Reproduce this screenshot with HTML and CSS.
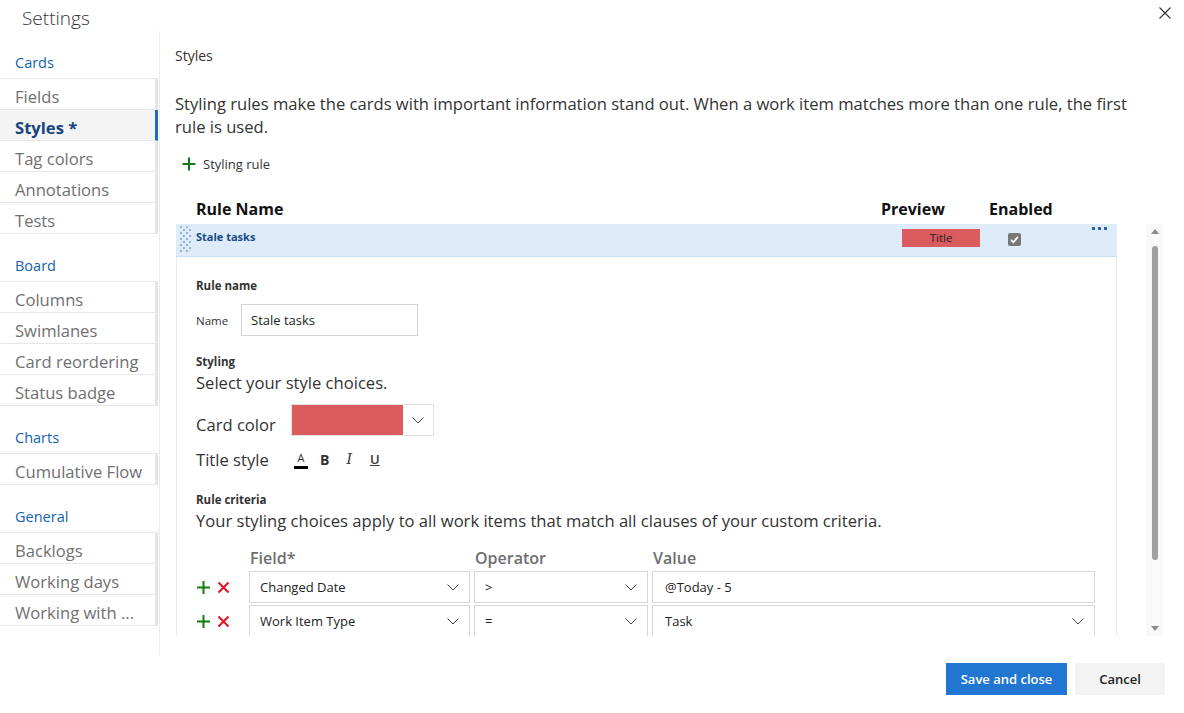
FILE: index.html
```html
<!DOCTYPE html>
<html lang="en">
<head>
<meta charset="utf-8">
<title>Settings</title>
<link rel="stylesheet" href="styles.css">
</head>
<body>
<div class="dialog">
  <header class="dlg-header">
    <h1 class="dlg-title">Settings</h1>
    <button class="close-btn" aria-label="Close">
      <svg width="12" height="12" viewBox="0 0 12 12"><path d="M0.5 0.5 L11.5 11.5 M11.5 0.5 L0.5 11.5" stroke="#333" stroke-width="1.1" fill="none"/></svg>
    </button>
  </header>

  <div class="dlg-body">
    <nav class="nav">
      <div class="nav-section">Cards</div>
      <div class="nav-item">Fields</div>
      <div class="nav-item selected">Styles *</div>
      <div class="nav-item">Tag colors</div>
      <div class="nav-item">Annotations</div>
      <div class="nav-item">Tests</div>
      <div class="nav-section">Board</div>
      <div class="nav-item">Columns</div>
      <div class="nav-item">Swimlanes</div>
      <div class="nav-item">Card reordering</div>
      <div class="nav-item">Status badge</div>
      <div class="nav-section">Charts</div>
      <div class="nav-item">Cumulative Flow</div>
      <div class="nav-section">General</div>
      <div class="nav-item">Backlogs</div>
      <div class="nav-item">Working days</div>
      <div class="nav-item">Working with ...</div>
    </nav>

    <main class="content">
      <div class="page-title">Styles</div>
      <p class="desc">Styling rules make the cards with important information stand out. When a work item matches more than one rule, the first rule is used.</p>
      <button class="add-rule">
        <svg width="14" height="14" viewBox="0 0 14 14"><path d="M7 0.5 V13.5 M0.5 7 H13.5" stroke="#107c10" stroke-width="2" fill="none"/></svg>
        <span>Styling rule</span>
      </button>

      <div class="rules-head">
        <div></div>
        <div class="col-name">Rule Name</div>
        <div class="col-preview">Preview</div>
        <div class="col-enabled">Enabled</div>
        <div></div>
      </div>

      <div class="rules-scroll">
        <div class="rules-list">
          <div class="rule-row">
            <div class="handle">
              <svg width="12" height="30" viewBox="0 0 12 30">
                <g fill="#8fb3da">
                  <rect x="0" y="1" width="2" height="2"/><rect x="6" y="1" width="2" height="2"/>
                  <rect x="3" y="4" width="2" height="2"/><rect x="9" y="4" width="2" height="2"/>
                  <rect x="0" y="7" width="2" height="2"/><rect x="6" y="7" width="2" height="2"/>
                  <rect x="3" y="10" width="2" height="2"/><rect x="9" y="10" width="2" height="2"/>
                  <rect x="0" y="13" width="2" height="2"/><rect x="6" y="13" width="2" height="2"/>
                  <rect x="3" y="16" width="2" height="2"/><rect x="9" y="16" width="2" height="2"/>
                  <rect x="0" y="19" width="2" height="2"/><rect x="6" y="19" width="2" height="2"/>
                  <rect x="3" y="22" width="2" height="2"/><rect x="9" y="22" width="2" height="2"/>
                  <rect x="0" y="25" width="2" height="2"/><rect x="6" y="25" width="2" height="2"/>
                </g>
              </svg>
            </div>
            <div class="rule-name">Stale tasks</div>
            <div class="preview-cell"><span class="preview-box">Title</span></div>
            <div class="enabled-cell">
              <svg width="13" height="13" viewBox="0 0 13 13"><rect x="0" y="0" width="13" height="13" rx="2" fill="#787878"/><path d="M3 6.8 L5.4 9.2 L10 3.8" stroke="#fff" stroke-width="1.8" fill="none"/></svg>
            </div>
            <div class="more-cell">
              <svg width="15" height="4" viewBox="0 0 15 4"><g fill="#2b63a8"><rect x="0" y="0" width="3" height="3"/><rect x="6" y="0" width="3" height="3"/><rect x="12" y="0" width="3" height="3"/></g></svg>
            </div>
          </div>

          <div class="rule-panel">
            <div class="label-bold">Rule name</div>
            <div class="name-row">
              <span class="small-label">Name</span>
              <div class="text-input">Stale tasks</div>
            </div>

            <div class="label-bold mt-styling">Styling</div>
            <div class="help-text">Select your style choices.</div>

            <div class="color-row">
              <span class="big-label">Card color</span>
              <div class="color-picker">
                <span class="swatch"></span>
                <span class="picker-chev">
                  <svg width="12" height="7" viewBox="0 0 12 7"><path d="M0.5 0.5 L6 6 L11.5 0.5" stroke="#444" stroke-width="1" fill="none"/></svg>
                </span>
              </div>
            </div>

            <div class="title-row">
              <span class="big-label">Title style</span>
              <div class="fmt-tools">
                <span class="fmt fmt-a">A</span>
                <span class="fmt fmt-b">B</span>
                <span class="fmt fmt-i">I</span>
                <span class="fmt fmt-u">U</span>
              </div>
            </div>

            <div class="label-bold mt-criteria">Rule criteria</div>
            <div class="help-text">Your styling choices apply to all work items that match all clauses of your custom criteria.</div>

            <div class="criteria">
              <div></div>
              <div class="crit-head">Field*</div>
              <div class="crit-head">Operator</div>
              <div class="crit-head">Value</div>

              <div class="crit-actions">
                <svg width="13" height="13" viewBox="0 0 13 13"><path d="M6.5 0 V13 M0 6.5 H13" stroke="#107c10" stroke-width="2" fill="none"/></svg>
                <svg width="13" height="13" viewBox="0 0 13 13"><path d="M1.5 1.5 L11.5 11.5 M11.5 1.5 L1.5 11.5" stroke="#e81123" stroke-width="2" fill="none"/></svg>
              </div>
              <div class="select"><span>Changed Date</span><svg width="12" height="7" viewBox="0 0 12 7"><path d="M0.5 0.5 L6 6 L11.5 0.5" stroke="#444" stroke-width="1" fill="none"/></svg></div>
              <div class="select"><span>&gt;</span><svg width="12" height="7" viewBox="0 0 12 7"><path d="M0.5 0.5 L6 6 L11.5 0.5" stroke="#444" stroke-width="1" fill="none"/></svg></div>
              <div class="select value"><span>@Today - 5</span></div>

              <div class="crit-actions">
                <svg width="13" height="13" viewBox="0 0 13 13"><path d="M6.5 0 V13 M0 6.5 H13" stroke="#107c10" stroke-width="2" fill="none"/></svg>
                <svg width="13" height="13" viewBox="0 0 13 13"><path d="M1.5 1.5 L11.5 11.5 M11.5 1.5 L1.5 11.5" stroke="#e81123" stroke-width="2" fill="none"/></svg>
              </div>
              <div class="select"><span>Work Item Type</span><svg width="12" height="7" viewBox="0 0 12 7"><path d="M0.5 0.5 L6 6 L11.5 0.5" stroke="#444" stroke-width="1" fill="none"/></svg></div>
              <div class="select"><span>=</span><svg width="12" height="7" viewBox="0 0 12 7"><path d="M0.5 0.5 L6 6 L11.5 0.5" stroke="#444" stroke-width="1" fill="none"/></svg></div>
              <div class="select value"><span>Task</span><svg width="12" height="7" viewBox="0 0 12 7"><path d="M0.5 0.5 L6 6 L11.5 0.5" stroke="#444" stroke-width="1" fill="none"/></svg></div>
            </div>
          </div>
        </div>

        <div class="vscroll">
          <svg width="8" height="5" viewBox="0 0 8 5"><path d="M0 5 L4 0 L8 5 Z" fill="#8a8a8a"/></svg>
          <div class="thumb-track"><div class="thumb"></div></div>
          <svg width="8" height="5" viewBox="0 0 8 5"><path d="M0 0 L4 5 L8 0 Z" fill="#8a8a8a"/></svg>
        </div>
      </div>
    </main>
  </div>

  <footer class="dlg-footer">
    <button class="btn btn-primary">Save and close</button>
    <button class="btn btn-default">Cancel</button>
  </footer>
</div>
</body>
</html>
```

FILE: styles.css
```css
* { box-sizing: border-box; }

html, body {
  margin: 0;
  padding: 0;
  background: #fff;
}

body {
  font-family: "Open Sans", "Noto Sans", sans-serif;
  color: #333;
  width: 1184px;
  height: 713px;
  overflow: hidden;
}

.dialog {
  display: flex;
  flex-direction: column;
  height: 713px;
}

/* Header */
.dlg-header {
  height: 31px;
  display: flex;
  justify-content: space-between;
  align-items: flex-start;
  flex: none;
}

.dlg-title {
  margin: 0;
  padding: 4px 0 0 22px;
  font-size: 19px;
  line-height: 28px;
  font-weight: 300;
  color: #333;
}

.close-btn {
  border: 0;
  background: transparent;
  padding: 0;
  margin: 7px 13px 0 0;
  width: 12px;
  height: 12px;
  display: flex;
}

/* Body */
.dlg-body {
  display: flex;
  height: 624px;
  flex: none;
}

.nav {
  width: 160px;
  flex: none;
  border-right: 1px solid #ececec;
  display: flex;
  flex-direction: column;
}

.nav-section {
  height: 48px;
  padding: 22px 0 0 15px;
  font-size: 14.5px;
  line-height: 20px;
  color: #1462b3;
  border-bottom: 1px solid #e8e8e8;
  margin-right: 1px;
}

.nav-item {
  height: 31px;
  padding: 6px 0 0 15px;
  font-size: 16.6px;
  line-height: 24px;
  color: #707070;
  border-bottom: 1px solid #e8e8e8;
  border-right: 3px solid #e6e6e6;
  margin-right: 1px;
  white-space: nowrap;
}

.nav-item.selected {
  background: #f4f4f4;
  color: #17457f;
  font-weight: 700;
  border-right-color: #1e6bc0;
}

/* Content */
.content {
  flex: 1;
  padding-left: 15px;
  display: flex;
  flex-direction: column;
  min-width: 0;
}

.page-title {
  margin-top: 15px;
  font-size: 14px;
  line-height: 20px;
  color: #333;
}

.desc {
  margin: 26px 0 0 0;
  font-size: 16.6px;
  line-height: 23px;
  color: #333;
  max-width: 965px;
}

.add-rule {
  margin: 13px 0 0 7px;
  align-self: flex-start;
  border: 0;
  background: transparent;
  padding: 0;
  height: 26px;
  display: flex;
  align-items: center;
  gap: 7px;
  font-family: inherit;
  font-size: 13px;
  color: #333;
}

.rules-head,
.rule-row {
  display: grid;
  grid-template-columns: 20px 685px 108px 96px 32px;
}

.rules-head {
  margin: 16px 0 0 1px;
  width: 941px;
  height: 31px;
  align-items: center;
  font-size: 16px;
  font-weight: 700;
  color: #111;
}

.rules-scroll {
  display: flex;
  height: 412px;
  margin-left: 1px;
  overflow: hidden;
}

.rules-list {
  width: 941px;
  flex: none;
}

.rule-row {
  height: 33px;
  background: #deecf9;
  border-bottom: 1px solid #c7e0f4;
  align-items: start;
}

.handle {
  display: flex;
  padding-left: 4px;
  align-self: stretch;
  align-items: center;
}

.rule-name {
  padding-top: 5px;
  font-size: 11px;
  line-height: 16px;
  font-weight: 700;
  color: #1a4b87;
}

.preview-cell {
  padding: 5px 0 0 21px;
}

.preview-box {
  display: block;
  width: 78px;
  height: 18px;
  background: #db5b5e;
  font-size: 11.5px;
  line-height: 18px;
  text-align: center;
  color: #222;
}

.enabled-cell {
  padding: 9px 0 0 19px;
  display: flex;
}

.more-cell {
  padding: 3px 0 0 7px;
  display: flex;
}

.rule-panel {
  border-left: 1px solid #deecf9;
  border-right: 1px solid #deecf9;
  padding: 21px 0 40px 19px;
}

.label-bold {
  font-size: 11.5px;
  font-weight: 700;
  line-height: 16px;
  color: #333;
}

.name-row {
  margin-top: 10px;
  display: flex;
  align-items: center;
}

.small-label {
  font-size: 11.5px;
  width: 45px;
  color: #333;
}

.text-input {
  width: 177px;
  height: 32px;
  border: 1px solid #d4d4d4;
  padding: 0 9px;
  font-size: 13px;
  line-height: 30px;
  color: #222;
}

.mt-styling { margin-top: 18px; }
.mt-criteria { margin-top: 19px; }

.help-text {
  font-size: 16.6px;
  line-height: 22px;
  color: #333;
  margin-top: 2px;
}

.color-row {
  margin-top: 10px;
  display: flex;
  align-items: center;
}

.big-label {
  font-size: 16.6px;
  color: #333;
  width: 95px;
  padding-top: 8px;
}

.title-row {
  margin-top: 9px;
  display: flex;
  align-items: center;
  height: 28px;
}

.title-row .big-label { padding-top: 0; width: 98px; }

.color-picker {
  display: flex;
  width: 143px;
  height: 32px;
  border: 1px solid #e1e1e1;
}

.swatch {
  width: 111px;
  background: #db5b5e;
}

.picker-chev {
  flex: 1;
  display: flex;
  align-items: center;
  justify-content: center;
}

.fmt-tools {
  display: flex;
  align-items: center;
}

.fmt {
  color: #333;
  text-align: center;
}

.fmt-a {
  font-size: 11px;
  width: 14px;
  border-bottom: 3px solid #000;
  line-height: 14px;
  padding-bottom: 1px;
  margin-top: 2px;
}

.fmt-b {
  font-weight: 700;
  font-size: 14px;
  margin-left: 12px;
}

.fmt-i {
  font-family: "DejaVu Serif", serif;
  font-style: italic;
  font-size: 14px;
  margin-left: 17px;
}

.fmt-u {
  font-size: 13px;
  font-weight: 600;
  text-decoration: underline;
  margin-left: 18px;
}

.criteria {
  margin-top: 14px;
  display: grid;
  grid-template-columns: 49px 221px 174px 443px;
  column-gap: 4px;
  row-gap: 2px;
}

.crit-head {
  font-size: 16px;
  font-weight: 600;
  color: #6e6e6e;
  line-height: 24px;
  height: 23px;
  padding-left: 1px;
}

.crit-actions {
  display: flex;
  align-items: center;
  gap: 7px;
  padding-left: 1px;
}

.select {
  height: 32px;
  border: 1px solid #d8d8d8;
  display: flex;
  align-items: center;
  justify-content: space-between;
  padding: 0 10px;
  font-size: 13px;
  color: #222;
}

.select.value { padding-left: 12px; }

/* Scrollbar */
.vscroll {
  margin-left: 29px;
  width: 17px;
  background: #f9f9f9;
  display: flex;
  flex-direction: column;
  align-items: center;
  padding: 5px 0 5px;
}

.thumb-track {
  flex: 1;
  display: flex;
  justify-content: center;
  padding: 12px 0 66px;
}

.thumb {
  width: 6px;
  background: #a0a0a0;
  border-radius: 3px;
}

/* Footer */
.dlg-footer {
  flex: 1;
  display: flex;
  justify-content: flex-end;
  align-items: flex-start;
  padding: 8px 19px 0 0;
  gap: 8px;
}

.btn {
  height: 32px;
  border: 0;
  font-family: inherit;
  font-size: 13px;
  font-weight: 600;
  padding: 0;
}

.btn-primary {
  width: 121px;
  background: #2176d2;
  color: #fff;
}

.btn-default {
  width: 90px;
  background: #f3f3f3;
  color: #222;
}
```
